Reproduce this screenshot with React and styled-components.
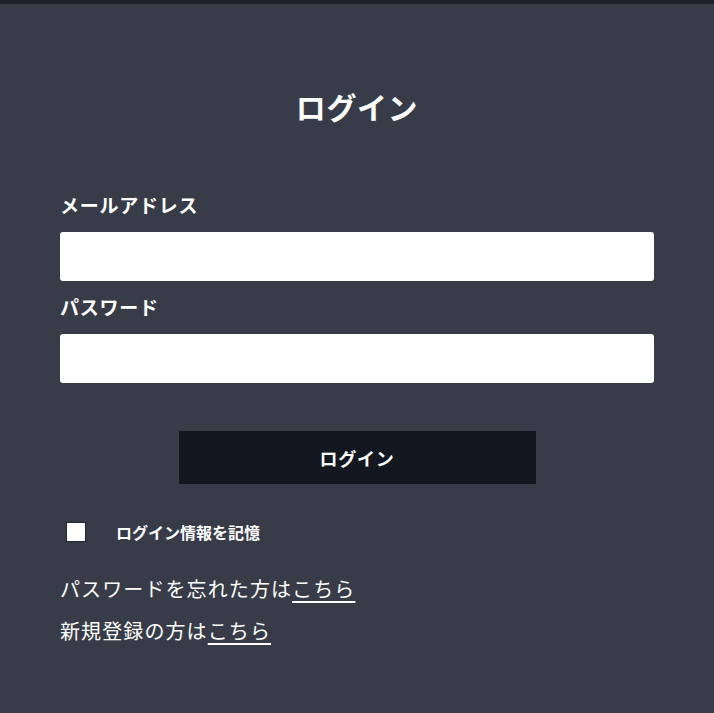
import React, { useState } from 'react';
import styled, { createGlobalStyle } from 'styled-components';

const GlobalStyle = createGlobalStyle`
  html, body {
    margin: 0;
    padding: 0;
    background: #373c48;
  }
  body {
    font-family: "Noto Sans CJK JP", "Noto Sans", sans-serif;
    color: #fff;
  }
`;

const Page = styled.div`
  min-height: 713px;
  background: #373c48;
  border-top: 4px solid #1c212b;
  box-sizing: border-box;
`;

const Form = styled.form`
  display: flex;
  flex-direction: column;
  padding: 80px 60px 40px;
`;

const Title = styled.h1`
  margin: 0 0 63px;
  text-align: center;
  font-size: 30px;
  font-weight: 700;
  line-height: 44px;
  letter-spacing: 0.02em;
`;

const Label = styled.label`
  font-size: 19px;
  font-weight: 700;
  line-height: 28px;
  letter-spacing: 0.04em;
  margin-bottom: 13px;
`;

const Input = styled.input`
  height: 49px;
  border: none;
  border-radius: 3px;
  background: #fff;
  padding: 0 12px;
  font-size: 16px;
  margin-bottom: ${(p) => p.$gap || 0}px;
  outline: none;
`;

const Submit = styled.button`
  align-self: center;
  width: 357px;
  height: 53px;
  margin-top: 48px;
  background: #131720;
  color: #fff;
  border: none;
  font-family: inherit;
  font-size: 18px;
  font-weight: 700;
  letter-spacing: 0.04em;
  cursor: pointer;
`;

const RememberRow = styled.label`
  display: flex;
  align-items: center;
  margin: 36px 0 0 6px;
  gap: 30px;
  font-size: 16px;
  font-weight: 700;
  cursor: pointer;
`;

const Box = styled.span`
  width: 18px;
  height: 18px;
  background: #fff;
  border: 1px solid #1f2937;
`;

const LinkLine = styled.p`
  margin: ${(p) => p.$top}px 0 0;
  font-size: 20px;
  line-height: 30px;
  letter-spacing: 0.055em;
`;

const Here = styled.a`
  color: #fff;
  text-decoration: underline;
  text-underline-offset: 4px;
  cursor: pointer;
`;

export default function App() {
  const [remember, setRemember] = useState(false);
  return (
    <Page>
      <GlobalStyle />
      <Form onSubmit={(e) => e.preventDefault()}>
        <Title>ログイン</Title>
        <Label htmlFor="email">メールアドレス</Label>
        <Input id="email" type="email" $gap={12} />
        <Label htmlFor="password">パスワード</Label>
        <Input id="password" type="password" />
        <Submit type="submit">ログイン</Submit>
        <RememberRow onClick={() => setRemember(!remember)}>
          <Box />
          ログイン情報を記憶
        </RememberRow>
        <LinkLine $top={30}>
          パスワードを忘れた方は<Here>こちら</Here>
        </LinkLine>
        <LinkLine $top={12}>
          新規登録の方は<Here>こちら</Here>
        </LinkLine>
      </Form>
    </Page>
  );
}
